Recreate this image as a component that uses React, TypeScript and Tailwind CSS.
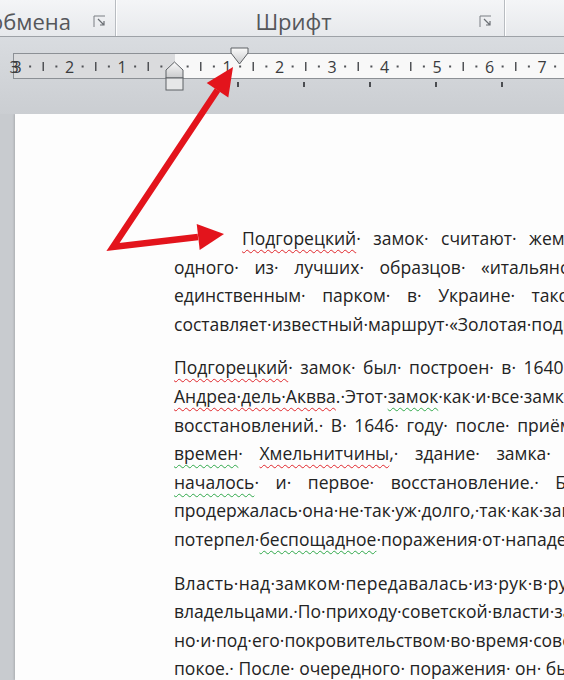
import React from "react";

const UNIT = 52.5;
const ZERO = 174.5;

type LineDef = { text: string; ws?: number; indent?: number; ls?: number };

const paragraphs: LineDef[][] = [
  [
    { text: "[r:Подгорецкий]· замок· считают· жемчужиной· Западной· Украины", ws: 8, indent: 68 },
    { text: "одного· из· лучших· образцов· «итальянских»· дворцов", ws: 11 },
    { text: "единственным· парком· в· Украине· такого· типа.", ws: 12 },
    { text: "составляет·известный·маршрут·«Золотая·подкова»" },
  ],
  [
    { text: "[r:Подгорецкий]· замок· был· построен· в· 1640· году· по· проекту", ws: 3 },
    { text: "[r:Андреа·дель·Аквва].·Этот·[g:замок]·как·и·все·замки" },
    { text: "восстановлений.· В· 1646· году· после· приёма", ws: 3 },
    { text: "[g:времен]· [r:Хмельнитчины],· здание· замка· потерпело", ws: 12 },
    { text: "[g:началось]· и· первое· восстановление.· Более", ws: 12 },
    { text: "продержалась·она·не·так·уж·долго,·так·как·замок" },
    { text: "потерпел·[g:беспощадное]·поражения·от·нападения" },
  ],
  [
    { text: "Власть·над·замком·передавалась·из·рук·в·руки", ls: 0.3 },
    { text: "владельцами.·По·приходу·советской·власти·замок" },
    { text: "но·и·под·его·покровительством·во·время·советов" },
    { text: "покое.· После· очередного· поражения· он· был", ws: 0 },
  ],
];

const DocLine = ({ text, ws = 0, indent = 0, ls = 0 }: LineDef) => {
  const parts = text.split(/(\[[rg]:[^\]]+\])/).filter(Boolean);
  return (
    <div className="whitespace-nowrap" style={{ wordSpacing: ws, paddingLeft: indent, letterSpacing: ls }}>
      {parts.map((p, i) => {
        const m = p.match(/^\[([rg]):([^\]]+)\]$/);
        if (!m) return <span key={i}>{p}</span>;
        return (
          <span
            key={i}
            className={
              m[1] === "r"
                ? "underline decoration-wavy decoration-[#e0262b] decoration-1 underline-offset-[4px]"
                : "underline decoration-wavy decoration-[#2fa84a] decoration-1 underline-offset-[4px]"
            }
          >
            {m[2]}
          </span>
        );
      })}
    </div>
  );
};

const Launcher = () => (
  <svg width="14" height="13" viewBox="0 0 14 13" className="shrink-0">
    <path d="M1 12V1h11" fill="none" stroke="#7b7f84" strokeWidth="1" />
    <path d="M5 4l6 6M11 6v4H7" fill="none" stroke="#6b6f74" strokeWidth="1.2" />
  </svg>
);

const Ruler = () => {
  const ticks: React.ReactNode[] = [];
  for (let k = -13; k <= 30; k++) {
    const x = ZERO + k * (UNIT / 4);
    if (x < 14) continue;
    if (k % 4 === 0) {
      if (k === 0) continue;
      ticks.push(
        <text key={k} x={x} y={36} textAnchor="middle" fontSize="16" fill="#3a3b3d" fontFamily="'Open Sans', sans-serif">
          {Math.abs(k / 4)}
        </text>
      );
    } else if (Math.abs(k % 2) === 0) {
      ticks.push(<rect key={k} x={x - 0.75} y={25} width={1.5} height={9} fill="#505256" />);
    } else {
      ticks.push(<rect key={k} x={x - 1} y={28.5} width={2} height={2} fill="#505256" />);
    }
  }
  const tabs = [238, 304, 370, 436, 502];
  return (
    <svg className="absolute inset-0" width="564" height="77" viewBox="0 0 564 77">
      <defs>
        <linearGradient id="mk" x1="0" y1="0" x2="0" y2="1">
          <stop offset="0" stopColor="#fafafa" />
          <stop offset="1" stopColor="#c9cacc" />
        </linearGradient>
      </defs>
      <text x={14} y={36} textAnchor="middle" fontSize="16" fill="#3a3b3d" fontFamily="'Open Sans', sans-serif">
        3
      </text>
      {ticks}
      {tabs.map((x) => (
        <rect key={x} x={x - 1} y={45} width={2} height={5} fill="#4b4d51" />
      ))}
      <path d="M174.5 25L183 33V41H166V33Z" fill="url(#mk)" stroke="#5d6064" strokeWidth="1" />
      <rect x={166} y={41} width={17} height={12} fill="#e6e7e8" stroke="#5d6064" strokeWidth="1" />
      <path d="M231 11H248V16L239.5 27L231 16Z" fill="url(#mk)" stroke="#5d6064" strokeWidth="1" />
    </svg>
  );
};

export default function App() {
  return (
    <div className="relative h-[680px] w-[564px] overflow-hidden bg-[#c8cbcf] font-['Open_Sans',sans-serif]">
      {/* ribbon group labels */}
      <div className="flex h-[37px] border-b border-[#9ea2a7] bg-gradient-to-b from-[#f4f5f7] to-[#e7e9ec] text-[22px] leading-[22px] text-[#55575b]">
        <div className="flex w-[116px] shrink-0 items-start border-r border-[#b8bcc1]">
          <span className="-ml-[10px] pt-[10px]">обмена</span>
          <div className="ml-auto mr-[8px] pt-[15px]">
            <Launcher />
          </div>
        </div>
        <div className="flex w-[389px] shrink-0 items-start border-l border-white border-r border-r-[#b8bcc1]">
          <span className="flex-1 pt-[10px] text-center">Шрифт</span>
          <div className="ml-[9px] mr-[11px] pt-[15px]">
            <Launcher />
          </div>
        </div>
        <div className="flex-1 border-l border-white" />
      </div>

      {/* ruler */}
      <div className="relative h-[77px] bg-gradient-to-b from-[#d9dce0] to-[#cbced2] pt-[16px]">
        <div className="ml-[13px] flex h-[26px] border border-r-0 border-[#8c9095]">
          <div className="w-[161px] shrink-0 bg-[#dadbdd]" />
          <div className="flex-1 bg-[#f8f8f8]" />
        </div>
        <Ruler />
      </div>

      {/* page */}
      <div className="ml-[15px] h-[566px] bg-[#fdfdfd] pl-[159px] pt-[110px] text-[17.5px] leading-[28.6px] text-[#232323] shadow-[-1px_0_2px_rgba(0,0,0,0.15)]">
        {paragraphs.map((para, pi) => (
          <div key={pi} className="mb-[15px]">
            {para.map((l, li) => (
              <DocLine key={li} {...l} />
            ))}
          </div>
        ))}
      </div>

      {/* red arrow */}
      <svg className="pointer-events-none absolute inset-0" width="564" height="680" viewBox="0 0 564 680">
        <polyline
          points="217.5,90 113,247 198,237"
          fill="none"
          stroke="#e3141c"
          strokeWidth="6.5"
          strokeLinejoin="miter"
          strokeMiterlimit="10"
        />
        <polygon points="233,67 228.3,97.5 206.7,83.1" fill="#e3141c" />
        <polygon points="224,234 199.7,249.9 196.7,224.1" fill="#e3141c" />
      </svg>
    </div>
  );
}
